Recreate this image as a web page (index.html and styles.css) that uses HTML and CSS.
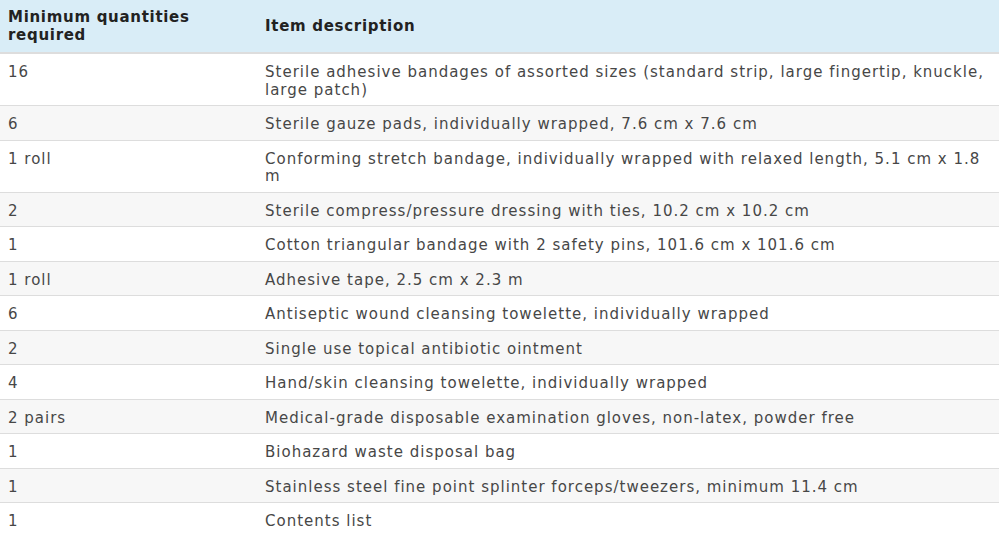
FILE: index.html
```html
<!DOCTYPE html>
<html>
<head>
<meta charset="utf-8">
<link rel="stylesheet" href="styles.css">
</head>
<body>
<table class="kit">
<thead>
<tr><th class="qty">Minimum quantities required</th><th>Item description</th></tr>
</thead>
<tbody>
<tr><td>16</td><td>Sterile adhesive bandages of assorted sizes (standard strip, large fingertip, knuckle, large patch)</td></tr>
<tr><td>6</td><td>Sterile gauze pads, individually wrapped, 7.6 cm x 7.6 cm</td></tr>
<tr><td>1 roll</td><td>Conforming stretch bandage, individually wrapped with relaxed length, 5.1 cm x 1.8 m</td></tr>
<tr><td>2</td><td>Sterile compress/pressure dressing with ties, 10.2 cm x 10.2 cm</td></tr>
<tr><td>1</td><td>Cotton triangular bandage with 2 safety pins, 101.6 cm x 101.6 cm</td></tr>
<tr><td>1 roll</td><td>Adhesive tape, 2.5 cm x 2.3 m</td></tr>
<tr><td>6</td><td>Antiseptic wound cleansing towelette, individually wrapped</td></tr>
<tr><td>2</td><td>Single use topical antibiotic ointment</td></tr>
<tr><td>4</td><td>Hand/skin cleansing towelette, individually wrapped</td></tr>
<tr><td>2 pairs</td><td>Medical-grade disposable examination gloves, non-latex, powder free</td></tr>
<tr><td>1</td><td>Biohazard waste disposal bag</td></tr>
<tr><td>1</td><td>Stainless steel fine point splinter forceps/tweezers, minimum 11.4 cm</td></tr>
<tr><td>1</td><td>Contents list</td></tr>
</tbody>
</table>
</body>
</html>
```
FILE: styles.css
```css
html, body {
  margin: 0;
  padding: 0;
  background: #fff;
}
.kit {
  width: 999px;
  border-collapse: collapse;
  font-family: "DejaVu Sans", sans-serif;
  font-size: 15px;
  line-height: 17.5px;
  letter-spacing: 1px;
  color: #474747;
}
.kit th {
  background: #d9edf7;
  color: #222;
  font-weight: bold;
  letter-spacing: 0.7px;
  text-align: left;
  vertical-align: middle;
  padding: 9px 8px 8px;
  border-bottom: 2px solid #ddd;
}
.kit th.qty {
  width: 241px;
}
.kit td {
  padding: 10px 8px 6px;
  vertical-align: top;
  border-top: 1px solid #ddd;
}
.kit tbody tr:first-child td {
  border-top: none;
}
.kit tbody tr:nth-child(even) td {
  background: #f7f7f7;
}
```
